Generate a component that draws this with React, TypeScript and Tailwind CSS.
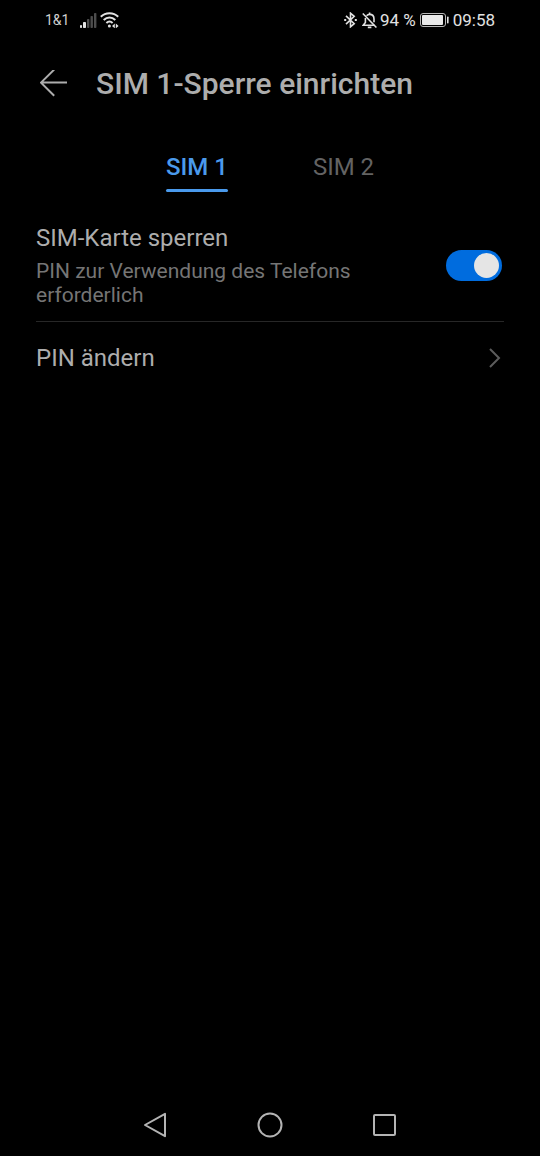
import { useState } from 'react';

function StatusBar() {
  return (
    <div className="flex h-10 items-center justify-between px-[45px] text-[#e2e2e2]">
      <div className="flex items-center">
        <span className="text-[14px] leading-5 text-[#cfcfcf]">1&amp;1</span>
        <svg className="ml-[11px] h-4 w-[17px]" viewBox="0 0 17 16" aria-hidden="true">
          <rect x="0" y="13" width="2" height="3" rx="0.8" fill="#e2e2e2" />
          <rect x="3" y="10" width="3" height="6" rx="0.8" fill="#e2e2e2" />
          <rect x="7" y="7" width="2.4" height="9" rx="0.8" fill="#4d4d4d" />
          <rect x="10.5" y="4" width="2.4" height="12" rx="0.8" fill="#4d4d4d" />
          <rect x="14" y="1" width="2.4" height="15" rx="0.8" fill="#4d4d4d" />
        </svg>
        <svg className="ml-[3px] h-4 w-5" viewBox="0 0 20 16" fill="none" stroke="#e2e2e2" strokeWidth="2" aria-hidden="true">
          <path d="M0.8 4.8C5.6 0 13.4 0 18.2 4.8" />
          <path d="M3.7 8C7.2 4.5 11.8 4.5 15.3 8" />
          <path d="M6.4 11C8.3 9.2 10.7 9.2 12.6 11" />
          <circle cx="9.4" cy="14" r="1.5" fill="#e2e2e2" stroke="none" />
          <path d="M12 13.9L14.8 11.4V16.4ZM18.6 13.9L15.8 11.4V16.4Z" fill="#e2e2e2" stroke="none" />
        </svg>
      </div>
      <div className="flex items-center">
        <svg className="h-4 w-[13px]" viewBox="0 0 13 16" fill="none" stroke="#e2e2e2" strokeWidth="1.6" aria-hidden="true">
          <path d="M2 3.8L10.2 11.6L6.5 14.8V1.2L10.2 4.4L2 12.2" />
          <path d="M0.2 8H2.2M10.8 8H12.8" strokeWidth="2" />
        </svg>
        <svg className="ml-[5px] h-[17px] w-4" viewBox="0 0 16 17" fill="none" stroke="#e2e2e2" strokeWidth="1.6" aria-hidden="true">
          <path d="M4.6 3.8C5.4 2.9 6.4 2.4 7.6 2.4C10.4 2.4 12 4.4 12 7V10.2" />
          <path d="M3.4 6V10.5L1.2 13.2H12.5" />
          <path d="M7.6 0.6V2.4M5.8 15.4H9.4" />
          <path d="M0.8 1.5L14.4 15.5" />
        </svg>
        <span className="ml-0.5 text-[17px] leading-5">94 %</span>
        <svg className="ml-1 h-4 w-[30px]" viewBox="0 0 30 16" aria-hidden="true">
          <rect x="0.5" y="1.5" width="25" height="13" rx="2.5" fill="none" stroke="#b5b5b5" strokeWidth="1" />
          <rect x="2" y="3" width="21" height="10" rx="1" fill="#e8e8e8" />
          <rect x="27" y="4.5" width="1.6" height="7" rx="0.7" fill="#e2e2e2" />
        </svg>
        <span className="ml-[3px] text-[17px] leading-5">09:58</span>
      </div>
    </div>
  );
}

function NavBar() {
  return (
    <nav className="flex h-16 items-center justify-center gap-[87px]">
      <button type="button" aria-label="Zurück">
        <svg className="h-7 w-7" viewBox="0 0 28 28" fill="none" stroke="#b4b4b4" strokeWidth="2" strokeLinejoin="round">
          <path d="M4 15L24 3.8V26.2Z" />
        </svg>
      </button>
      <button type="button" aria-label="Startbildschirm">
        <svg className="h-7 w-7" viewBox="0 0 28 28" fill="none" stroke="#b4b4b4" strokeWidth="2">
          <circle cx="14" cy="15" r="11.5" />
        </svg>
      </button>
      <button type="button" aria-label="Letzte Apps">
        <svg className="h-7 w-7" viewBox="0 0 28 28" fill="none" stroke="#b4b4b4" strokeWidth="2">
          <rect x="3" y="5" width="21" height="20" rx="1" />
        </svg>
      </button>
    </nav>
  );
}

export default function App() {
  const [tab, setTab] = useState(0);
  const [locked, setLocked] = useState(true);

  return (
    <div className="flex min-h-screen flex-col bg-black font-[Roboto,sans-serif] text-[#adadad]">
      <StatusBar />
      <header className="flex h-[88px] items-center gap-7 pl-10">
        <button type="button" aria-label="Nach oben">
          <svg className="h-7 w-7" viewBox="0 0 28 28" fill="none" stroke="#adadad" strokeWidth="2">
            <path d="M27 12.6H1M14.2 -0.4L1 12.6L14.2 25.8" />
          </svg>
        </button>
        <h1 className="text-[30px] font-medium leading-9">SIM 1-Sperre einrichten</h1>
      </header>

      <div role="tablist" className="flex justify-center gap-[85px] pt-[22px]">
        {['SIM 1', 'SIM 2'].map((label, i) => (
          <button
            key={label}
            type="button"
            role="tab"
            aria-selected={tab === i}
            onClick={() => setTab(i)}
            className={
              tab === i
                ? 'flex flex-col gap-[5px] text-[24px] font-medium leading-[34px] text-[#4a9aec]'
                : 'flex flex-col gap-[5px] text-[24px] leading-[34px] text-[#636363]'
            }
          >
            {label}
            <span className={tab === i ? 'h-[3px] w-full rounded-full bg-[#4a9aec]' : 'h-[3px] w-full'} />
          </button>
        ))}
      </div>

      <main className="flex-1 px-9 pt-8">
        <label className="flex items-center justify-between border-b border-[#272727] pb-[14px]">
          <span className="flex max-w-[340px] flex-col gap-[7px]">
            <span className="text-[24px] leading-7">SIM-Karte sperren</span>
            <span className="text-[21px] leading-6 text-[#757575]">PIN zur Verwendung des Telefons erforderlich</span>
          </span>
          <input
            type="checkbox"
            role="switch"
            checked={locked}
            onChange={(e) => setLocked(e.target.checked)}
            className="mr-0.5 flex h-[31px] w-14 shrink-0 appearance-none items-center rounded-full bg-[#444444] px-[3px] before:h-[25px] before:w-[25px] before:rounded-full before:bg-[#e5e5e5] checked:justify-end checked:bg-[#006cde]"
          />
        </label>
        <button type="button" className="flex h-[71px] w-full items-center justify-between text-left text-[24px]">
          PIN ändern
          <svg className="mr-[3px] h-5 w-3" viewBox="0 0 12 20" fill="none" stroke="#5c5c5c" strokeWidth="2" aria-hidden="true">
            <path d="M1 1L10 10L1 19" />
          </svg>
        </button>
      </main>
      <NavBar />
    </div>
  );
}
